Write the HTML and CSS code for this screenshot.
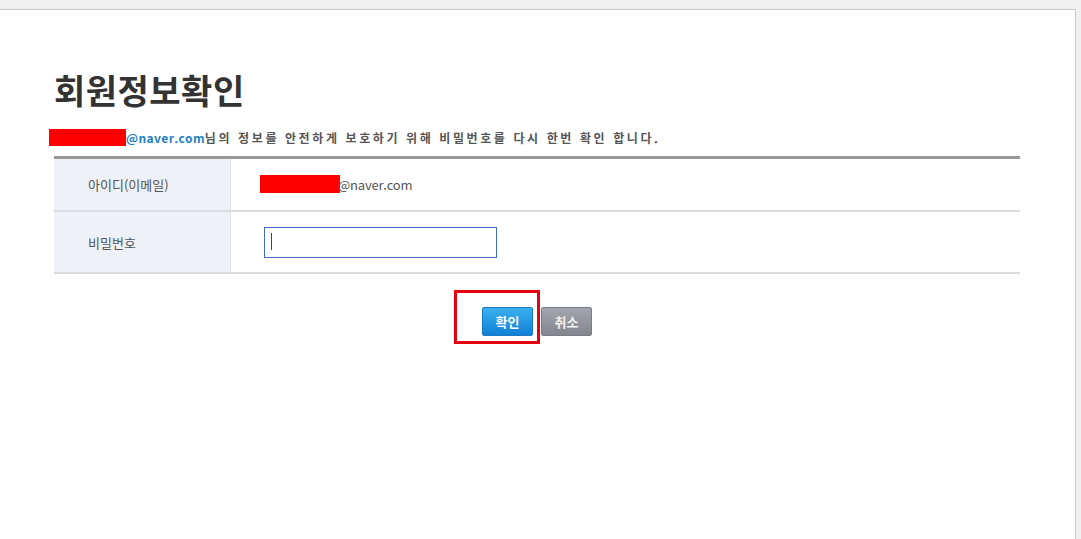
FILE: index.html
```html
<!DOCTYPE html>
<html lang="ko">
<head>
<meta charset="utf-8">
<title>회원정보확인</title>
<link rel="stylesheet" href="styles.css">
</head>
<body>
<div class="panel">
  <h1 class="title">회원정보확인</h1>
  <p class="notice"><span class="mask mask-notice"></span><span class="email">@naver.com</span>님의 정보를 안전하게 보호하기 위해 비밀번호를 다시 한번 확인 합니다.</p>
  <div class="form">
    <div class="row row-id">
      <div class="th">아이디(이메일)</div>
      <div class="td"><span class="mask mask-id"></span><span class="id-domain">@naver.com</span></div>
    </div>
    <div class="row row-pw">
      <div class="th">비밀번호</div>
      <div class="td"><span class="input-wrap"><input class="pw" type="password" aria-label="비밀번호"><span class="caret"></span></span></div>
    </div>
  </div>
  <div class="actions">
    <span class="ok-wrap"><button class="btn btn-ok" type="button">확인</button><span class="highlight"></span></span>
    <button class="btn btn-cancel" type="button">취소</button>
  </div>
</div>
</body>
</html>
```
FILE: styles.css
```css
html, body {
  margin: 0;
  padding: 0;
  background: #f0f0f0;
  height: 100%;
  overflow: hidden;
}
body {
  font-family: "Noto Sans CJK KR", "Noto Sans", sans-serif;
  color: #333;
}
.panel {
  margin-top: 9px;
  width: 1076px;
  height: calc(100% - 9px);
  background: #fff;
  border-top: 1px solid #c8c8c8;
  border-right: 1px solid #c8c8c8;
  padding: 0 0 0 54px;
  box-sizing: border-box;
}
.title {
  margin: 0;
  padding-top: 59px;
  font-size: 34px;
  line-height: 42px;
  font-weight: 700;
  letter-spacing: 0.5px;
  color: #333;
}
.notice {
  margin: 16px 0 0 -5px;
  height: 20px;
  display: flex;
  align-items: center;
  font-size: 12px;
  font-weight: 700;
  letter-spacing: 2.6px;
  color: #555;
  white-space: nowrap;
}
.mask {
  display: inline-block;
  background: #ff0000;
}
.mask-notice {
  width: 77px;
  height: 17px;
}
.email {
  color: #1f7fc4;
  letter-spacing: 0.4px;
}
.form {
  margin-top: 9px;
  width: 966px;
  border-top: 3px solid #999;
}
.row {
  display: flex;
  border-bottom: 2px solid #ddd;
}
.row-id { height: 51px; }
.row-pw { height: 60px; }
.th {
  width: 177px;
  flex: none;
  background: #eef1f7;
  border-right: 1px solid #dcdfe4;
  display: flex;
  align-items: center;
  padding-left: 34px;
  box-sizing: border-box;
  font-size: 13px;
  color: #555;
}
.td {
  flex: 1;
  display: flex;
  align-items: center;
  font-size: 13px;
  color: #555;
}
.row-id .td { padding-left: 29px; }
.row-pw .td { padding-left: 33px; }
.mask-id {
  width: 80px;
  height: 18px;
  margin-right: -2px;
  margin-top: -2px;
}
.id-domain {
  letter-spacing: -0.2px;
}
.input-wrap {
  position: relative;
  display: inline-block;
}
.pw {
  display: block;
  width: 233px;
  height: 31px;
  box-sizing: border-box;
  border: 1px solid #3f6ec0;
  outline: none;
  padding: 0 6px;
  margin: 0;
  background: #fff;
}
.caret {
  position: absolute;
  left: 7px;
  top: 6px;
  width: 1px;
  height: 17px;
  background: #444;
}
.actions {
  width: 966px;
  display: flex;
  justify-content: center;
  gap: 8px;
  margin-top: 33px;
}
.ok-wrap {
  position: relative;
  display: inline-block;
}
.btn {
  display: block;
  width: 51px;
  height: 29px;
  margin: 0;
  padding: 0;
  border-radius: 2px;
  font-family: "Noto Sans CJK KR", sans-serif;
  font-size: 13px;
  font-weight: 700;
  color: #fff;
  cursor: pointer;
}
.btn-ok {
  border: 1px solid #1879c4;
  background: linear-gradient(#3bb0f0, #0f80d6);
}
.btn-cancel {
  border: 1px solid #7a7d86;
  background: linear-gradient(#a3a6ae, #83868f);
  color: #f2f2f2;
}
.highlight {
  position: absolute;
  left: -28px;
  top: -17px;
  width: 86px;
  height: 54px;
  box-sizing: border-box;
  border: 3px solid #e60012;
  pointer-events: none;
}
```
